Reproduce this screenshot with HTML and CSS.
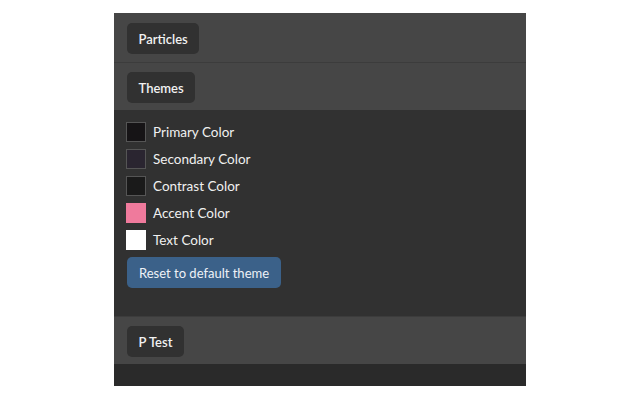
FILE: index.html
```html
<!DOCTYPE html>
<html>
<head>
<meta charset="utf-8">
<link rel="stylesheet" href="styles.css">
</head>
<body>
<div class="panel">
  <div class="section-head first">
    <button class="tab">Particles</button>
  </div>
  <div class="section-head">
    <button class="tab">Themes</button>
  </div>
  <div class="section-body">
    <div class="color-row"><span class="swatch primary"></span><span class="label">Primary Color</span></div>
    <div class="color-row"><span class="swatch secondary"></span><span class="label">Secondary Color</span></div>
    <div class="color-row"><span class="swatch contrast"></span><span class="label">Contrast Color</span></div>
    <div class="color-row"><span class="swatch accent"></span><span class="label">Accent Color</span></div>
    <div class="color-row"><span class="swatch text"></span><span class="label">Text Color</span></div>
    <button class="reset">Reset to default theme</button>
  </div>
  <div class="section-head">
    <button class="tab">P Test</button>
  </div>
  <div class="footer"></div>
</div>
</body>
</html>
```
FILE: styles.css
```css
html, body {
  margin: 0;
  padding: 0;
  background: #ffffff;
}
body {
  padding: 13px 0 0 114px;
  font-family: Lato, "Open Sans", sans-serif;
}
.panel {
  width: 412px;
  background: #2a2a2a;
}
.section-head {
  background: #464646;
  height: 48px;
  box-sizing: border-box;
  padding: 9px 13px 8px;
  border-top: 1px solid #3c3c3c;
}
.section-head.first {
  height: 49px;
  padding-top: 10px;
  border-top: none;
}
.tab {
  height: 31px;
  padding: 0 11.5px;
  border: none;
  border-radius: 5px;
  background: #313131;
  color: #f2f2f2;
  font-family: Lato, sans-serif;
  font-size: 13px;
  font-weight: 600;
}
.section-body {
  background: #313131;
  padding: 12px 12px 28px;
  display: flex;
  flex-direction: column;
  gap: 7px;
}
.color-row {
  display: flex;
  align-items: center;
  gap: 7px;
  height: 20px;
}
.swatch {
  width: 20px;
  height: 20px;
  box-sizing: border-box;
  border: 1px solid #555;
}
.swatch.primary { background: #161416; }
.swatch.secondary { background: #2a2530; }
.swatch.contrast { background: #1a1a1a; }
.swatch.accent { background: #ef7a9c; border-color: #ef7a9c; }
.swatch.text { background: #ffffff; border-color: #ffffff; }
.label {
  color: #f0f0f0;
  font-size: 13.5px;
}
.reset {
  align-self: flex-start;
  margin-left: 1px;
  height: 31px;
  padding: 0 12px;
  border: none;
  border-radius: 5px;
  background: #3b6189;
  color: #eef2f7;
  font-family: Lato, sans-serif;
  font-size: 13px;
}
.footer {
  height: 22px;
  background: #2a2a2a;
}
```
